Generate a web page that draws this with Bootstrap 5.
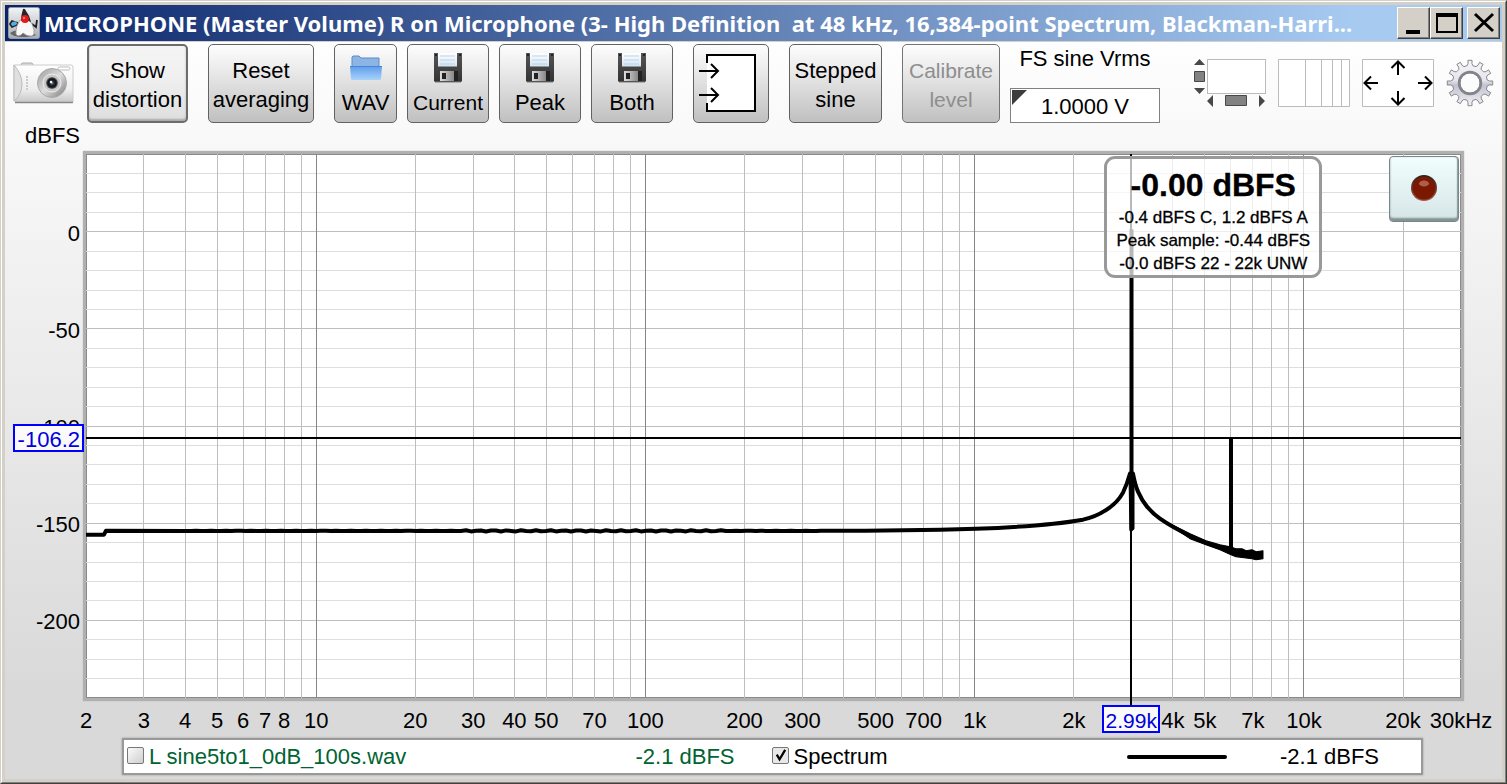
<!DOCTYPE html>
<html lang="en">
<head>
<meta charset="utf-8">
<meta name="viewport" content="width=device-width, initial-scale=1">
<title>RTA Spectrum</title>
<link rel="stylesheet" href="https://cdn.jsdelivr.net/npm/bootstrap@5.3.0/dist/css/bootstrap.min.css">
<style>
  body { font-family: "Liberation Sans", Arial, sans-serif; font-size: 22px; line-height: 30px; color: #000; background: #d4d0c8; }
  .app-window { border: 1px solid; border-color: #d4d0c8 #404040 #404040 #d4d0c8; min-height: 100vh; }
  .window-edge { border: 1px solid; border-color: #fff #808080 #808080 #fff; padding: 3px; }
  .title-bar { height: 36px; background: linear-gradient(90deg, #0a246a, #a6caf0 90%); color: #fff; font: 700 22px/36px "Noto Sans", sans-serif; padding: 0 2px 0 3px; }
  .title-bar h1 { font: inherit; white-space: pre; }
  .win-btn { width: 33px; height: 32px; padding: 0; background: #d4d0c8; border: 1px solid; border-color: #fff #404040 #404040 #fff; box-shadow: inset -1px -1px 0 #808080; }
  .client { background: linear-gradient(#fefefe, #d9d9d9 650px); border-top: 1px solid #d4d0c8; }
  .tool-btn { --bs-btn-color: #000; --bs-btn-disabled-color: #8e8e8e; --bs-btn-disabled-opacity: 1; --bs-btn-border-color: #626262; --bs-btn-disabled-border-color: #747474;
    --bs-btn-padding-x: 0px; --bs-btn-padding-y: 0px; --bs-btn-font-size: 22px; --bs-btn-line-height: 29px; --bs-btn-border-radius: 5px;
    height: 79px; flex: none; padding-top: 2px; background: linear-gradient(#fdfdfd, #ececec 30%, #c0c0c0) !important; }
  .tool-btn.pressed { background: linear-gradient(#f4f4f4, #f0f0f0 40%, #dedede) !important; border: 2px solid #6c6c6c; box-shadow: inset 0 -2px 2px #aaa; }
  .text-tight { font-size: 21px; }
  .save-btn { width: 82px; }
  .btn-art { display: block; margin: 0 auto 4px; }
  .bare-btn { padding: 0; border: 0; background: none; flex: none; line-height: 0; }
  .fs-input { width: 150px; height: 35px; border: 1px solid #808080; border-radius: 0; text-align: center; font-size: 22px; padding: 2px 0 0; color: #000; background: #fff; outline: 0; }
  .corner-flag { top: 2px; left: 2px; border-top: 15px solid #3c3c3c; border-right: 15px solid transparent; }
  .axis-unit { width: 75px; height: 28px; line-height: 26px; }
  .level-axis { width: 78px; }
  .plot-box { border: 3px solid #b0b0b0; background: #fff; box-shadow: 0 0 1px #aaa, inset 0 0 0 1px #8a8a8a; min-height: 300px; }
  .plot-margin { margin-right: 38px; }
  .freq-axis { height: 37px; margin: 0 41px 0 81px; }
  svg text { font-size: 22px; }
  .cursor-tag { border: 2px solid #00f; color: #0000e0; background: #fafafa; height: 28px; line-height: 27px; text-align: right; }
  .level-tag { width: 71px; right: -1px; padding-right: 2px; transform: translateY(-50%); z-index: 2; }
  .freq-tag { width: 58px; top: 4px; font-size: 21px; text-align: center; transform: translateX(-50%); }
  .readout { width: 218px; height: 122px; top: 2px; border: 3px solid #999; border-radius: 11px; background: rgba(255,255,255,.72); font-size: 17px; line-height: 23px; transform: translateX(-50%); padding-top: 9px; white-space: nowrap; -webkit-text-stroke: .3px #000; }
  .readout strong { display: block; font-size: 32px; line-height: 34px; margin-bottom: 4px; }
  .rec-btn { top: 2px; right: 2px; width: 70px; height: 66px; padding: 0; border: 1px solid #78888a; border-radius: 4px; background: linear-gradient(#f2fefe, #d5e5e5); box-shadow: inset 0 -3px 2px #809292, inset -1px 0 1px #8fa2a2; }
  .legend-box { margin: 0 79px 4px 117px; height: 37px; padding: 0 5px 0 3px; background: #fff; border: 2px solid #999; box-shadow: 0 0 2px #999; }
  .legend-cell { padding-right: 37px; line-height: 32px; }
  .trace-green { color: #006432; }
  .tick-box.form-check-input { width: 17px; height: 17px; margin: 0 5px 2px 0; border: 1px solid #777; border-radius: 2px; background-color: #e8e8e8; background-image: linear-gradient(135deg, #fafafa, #cfcfcf); flex: none; }
  .tick-box.form-check-input:checked { background-size: 100%; background-image: url("data:image/svg+xml,%3csvg xmlns='http://www.w3.org/2000/svg' viewBox='0 0 16 16'%3e%3cpath fill='none' stroke='%23000' stroke-width='2.4' d='M4 7l3 5 6-10'/%3e%3c/svg%3e"); }
  .trace-line { width: 100px; height: 4px; border-radius: 2px; background: #000; margin-right: 53px; }
</style>
</head>
<body>
<svg class="position-absolute" width="0" height="0" aria-hidden="true">
  <defs>
    <linearGradient id="gFloppy" x1="0" y1="0" x2="0" y2="1"><stop offset="0" stop-color="#555"/><stop offset="1" stop-color="#333"/></linearGradient>
    <linearGradient id="gSheet" x1="0" y1="0" x2="0" y2="1"><stop offset="0" stop-color="#fff"/><stop offset="1" stop-color="#d5e4f1"/></linearGradient>
    <linearGradient id="gMetal" x1="0" y1="0" x2="1" y2="0"><stop offset="0" stop-color="#ddd"/><stop offset="1" stop-color="#888"/></linearGradient>
  </defs>
  <symbol id="floppy" viewBox="0 0 30 32">
    <path d="M1 1h28v28l-1 1H2l-1-1z" fill="url(#gFloppy)"/>
    <path d="M2 30h26" stroke="#777" stroke-opacity=".5" stroke-width="2"/>
    <rect x="5" y="1" width="19" height="13.500" fill="url(#gSheet)"/>
    <path d="M7 4h15M7 8h15M7 12h15" stroke="#b9d5ea"/>
    <path d="M2 2h2v2H2zM26 2h2v2h-2z" fill="#222"/>
    <rect x="7" y="19" width="14" height="10" fill="url(#gMetal)"/>
    <rect x="9" y="21" width="4" height="6" fill="#222"/>
    <rect x="21" y="19" width="4" height="10" fill="#222"/>
  </symbol>
</svg>

<div class="app-window d-flex flex-column">
<div class="window-edge d-flex flex-column flex-grow-1">
  <header class="title-bar d-flex align-items-center">
    <svg class="flex-shrink-0 me-1" width="32" height="32" viewBox="0 0 32 32" aria-hidden="true">
      <defs><linearGradient id="gDuke" x1="0" y1="0" x2="0" y2="1"><stop offset="0" stop-color="#f2f4f6"/><stop offset="1" stop-color="#a9adb3"/></linearGradient></defs>
      <rect x=".5" y=".5" width="31" height="31" rx="2" fill="url(#gDuke)" stroke="#8e9aa8"/>
      <path d="M2 26q6-4 10-2l10 3q6 0 6 1-4 2-14 2-9 0-12-4z" fill="#666"/>
      <path d="M11 17 4 20l-2-3 2-3 6 2M24 17l4 3 1-7" stroke="#222" stroke-width="1.800" fill="none"/>
      <path d="M4 15l5-1-1 4-4 1z" fill="#4aaee8"/>
      <path d="M12 13Q8 19 8 24q-1 4 2 5 3 0 5-3 4 4 9 3 3-1 2-6-1-6-5-10z" fill="#f8f8f8" stroke="#888" stroke-width=".7"/>
      <path d="M15 2q2-1 3 2 4 5 5 11-5-3-10-1 0-6 2-12z" fill="#252525"/>
      <circle cx="17" cy="12" r="3.900" fill="#e21a1a"/><circle cx="16" cy="11" r="1.200" fill="#ff7070"/>
    </svg>
    <h1 class="m-0 flex-grow-1 overflow-hidden">MICROPHONE (Master Volume) R on Microphone (3- High Definition  at 48 kHz, 16,384-point Spectrum, Blackman-Harri...</h1>
    <div class="d-flex flex-shrink-0">
      <button class="win-btn" type="button" aria-label="Minimize"><svg class="d-block m-auto" width="28" height="28"><path d="M6 21h14v4H6z"/></svg></button>
      <button class="win-btn" type="button" aria-label="Maximize"><svg class="d-block m-auto" width="28" height="28"><path fill-rule="evenodd" d="M3 4h22v20H3zM5 8v14h18V8z"/></svg></button>
      <button class="win-btn ms-1" type="button" aria-label="Close"><svg class="d-block m-auto" width="28" height="28"><path d="M5 5l18 17M23 5 5 22" stroke="#000" stroke-width="3"/></svg></button>
    </div>
  </header>

  <main class="client d-flex flex-column flex-grow-1">
    <div class="toolbar d-flex align-items-start px-2" style="padding-top:2px" role="toolbar">
      <button class="bare-btn" type="button" aria-label="Capture image" style="margin:18px 13px 0 0">
        <svg width="61" height="43" viewBox="0 0 61 43">
          <defs>
            <linearGradient id="gCam" x1="0" y1="0" x2="0" y2="1"><stop offset="0" stop-color="#fff"/><stop offset=".65" stop-color="#eee"/><stop offset="1" stop-color="#c8c8c8"/></linearGradient>
            <linearGradient id="gRing" x1="0" y1="0" x2="1" y2="1"><stop offset="0" stop-color="#999"/><stop offset=".5" stop-color="#ddd"/><stop offset="1" stop-color="#777"/></linearGradient>
            <radialGradient id="gLens"><stop offset="0" stop-color="#8fa0c8"/><stop offset=".35" stop-color="#222839"/><stop offset=".7" stop-color="#111"/><stop offset="1" stop-color="#777"/></radialGradient>
          </defs>
          <path d="M8 3q0-2 2-2h8q2 0 2 2" fill="#ddd" stroke="#aaa"/>
          <path d="M1 3h57q2 0 2 2v35H3q-2 0-2-3z" fill="url(#gCam)" stroke="#ccc"/>
          <path d="M1 3q8 9 8 19T1 39z" fill="#e0e0e0" stroke="#bbb"/>
          <path d="M2 40.500h58" stroke="#888" stroke-width="1.500"/>
          <path d="M14 14v15" stroke="#ccc" stroke-width="2" stroke-dasharray="2 1"/>
          <rect x="45" y="5" width="12" height="3" rx="1.500" fill="#fff" stroke="#bbb"/>
          <circle cx="39" cy="21" r="14.500" fill="url(#gRing)" stroke="#aaa"/>
          <circle cx="39" cy="21" r="9" fill="#c8c8c8" stroke="#eee"/>
          <circle cx="39" cy="21" r="6" fill="url(#gLens)"/><circle cx="38" cy="20" r="1.200" fill="#fff"/>
        </svg>
      </button>
      <button class="btn tool-btn pressed" type="button" style="width:101px">Show<br>distortion</button>
      <button class="btn tool-btn" type="button" style="width:106px;margin-left:20px">Reset<br>averaging</button>
      <button class="btn tool-btn" type="button" style="width:63px;margin:0 10px 0 20px">
        <svg class="btn-art" width="34" height="32" viewBox="0 0 34 32">
          <defs><linearGradient id="gFold" x1="0" y1="0" x2="0" y2="1"><stop offset="0" stop-color="#5f9ceb"/><stop offset="1" stop-color="#a9d2fb"/></linearGradient></defs>
          <g transform="translate(0 2)"><path d="M3 12V3l1-1h6l2 2h18v9H3z" fill="#8db5e4" stroke="#5c8cc9"/>
          <path d="M1 12h32l-1 13-1 1H3l-1-1z" fill="url(#gFold)"/><path d="M1 12.500h32" stroke="#4486de"/></g>
        </svg>WAV</button>
      <button class="btn tool-btn save-btn text-tight" type="button"><svg class="btn-art" width="30" height="32"><use href="#floppy"/></svg>Current</button>
      <button class="btn tool-btn save-btn" type="button" style="margin:0 10px"><svg class="btn-art" width="30" height="32"><use href="#floppy"/></svg>Peak</button>
      <button class="btn tool-btn save-btn" type="button"><svg class="btn-art" width="30" height="32"><use href="#floppy"/></svg>Both</button>
      <button class="btn tool-btn pt-0" type="button" aria-label="Input selection" style="width:76px;margin:0 20px">
        <svg class="d-block" width="60" height="60" viewBox="0 0 60 60" fill="none" stroke="#000" stroke-width="2" style="margin:-2px 0 0 5px">
          <path d="M8 1h48v57H8z" fill="#fff" stroke="none"/><path d="M8 10V2h48v56H8v-8"/><path d="M0 18h18M12 11l7 7-7 7M0 42h18M12 35l7 7-7 7"/>
        </svg>
      </button>
      <button class="btn tool-btn" type="button" style="width:93px">Stepped<br>sine</button>
      <button class="btn tool-btn text-tight" type="button" disabled style="width:98px;margin:0 10px 0 20px">Calibrate<br>level</button>
      <div class="text-center flex-shrink-0">
        <label class="d-block" for="fs">FS sine Vrms</label>
        <div class="position-relative" style="margin-top:14px"><input class="form-control fs-input" id="fs" value="1.0000 V"><span class="corner-flag position-absolute"></span></div>
      </div>
      <div class="d-flex ms-auto" style="gap:12px;padding-top:15px">
        <button class="bare-btn" type="button" aria-label="Scrollbars"><svg class="d-block" width="73" height="48" viewBox="0 0 73 48" fill="#484848">
          <rect x="14.500" y=".5" width="58" height="34" fill="#fff" stroke="#bbb"/>
          <path d="M1 6l5.500-6L12 6zM1 29l5.500 6L12 29zM20 36v12l-6-6zM66 36v12l6-6z"/>
          <path d="M1.500 12.500h10v10h-10zM32.500 36.500h21v10h-21z" fill="#828282" stroke="#484848"/></svg></button>
        <button class="bare-btn" type="button" aria-label="Frequency axis scale"><svg class="d-block" width="72" height="48"><path d="M.5.5h71v47H.5zM27.500 0v48M43.500 0v48M54.500 0v48M63.500 0v48" fill="#fff" stroke="#bbb"/></svg></button>
        <button class="bare-btn" type="button" aria-label="Graph limits"><svg class="d-block" width="72" height="48" fill="none"><path d="M.5.5h71v47H.5z" fill="#fff" stroke="#bbb"/><path d="M36 16V3M29.500 9 36 2.500 42.500 9M36 32v13M29.500 39l6.500 6.500 6.500-6.500M16 24H3M9 17.500 2.500 24 9 30.500M56 24h13M63 17.500l6.500 6.500-6.500 6.500" stroke="#000" stroke-width="2"/></svg></button>
        <button class="bare-btn" type="button" aria-label="Controls"><svg class="d-block" width="48" height="48" viewBox="-24 -24 48 48">
          <defs><linearGradient id="gGear" x1="0" y1="0" x2="0" y2="1"><stop offset="0" stop-color="#f6f6f8"/><stop offset=".45" stop-color="#e4e4ec"/><stop offset=".55" stop-color="#c2c2d0"/><stop offset="1" stop-color="#f2f2f6"/></linearGradient></defs>
          <g id="gear" fill="url(#gGear)" stroke="#88888c" stroke-width="1"></g>
        </svg></button>
      </div>
    </div>

    <div class="axis-unit text-end">dBFS</div>

    <div class="d-flex flex-grow-1 plot-margin">
      <div class="level-axis position-relative d-flex flex-shrink-0 py-1">
        <svg id="levels" class="w-100 overflow-visible" style="height:auto"></svg>
        <div class="cursor-tag level-tag position-absolute" id="levelTag">-106.2</div>
      </div>
      <div class="plot-box position-relative d-flex flex-grow-1">
        <svg id="plot" class="flex-grow-1 overflow-visible" role="img" aria-label="Spectrum plot">
          <g id="grid"></g>
          <svg viewBox="0 0 1375 543" preserveAspectRatio="none" width="100%" height="100%" fill="none" stroke="#000" stroke-width="4" stroke-linejoin="round">
            <path id="trace"/>
            <path d="M740 376Q820 376 890 374Q960 371.500 997 365Q1010 362 1019 356Q1031 349 1037 338Q1041 330 1044 319H1047Q1049 330 1052 337Q1056 346 1061 352Q1067 359 1074 364Q1087 373 1104 381Q1120 389 1144 396"/>
            <path d="M1045.500 75V375M1145 283V394"/>
            <path d="M1043 322h5v52l-2 2h-2z" fill="#000" stroke-width="1"/>
            <path d="M1074 364L1104 379 1120 386 1134 390 1144 392 1150 394 1156 394 1160 396 1166 395 1170 397 1177 396V404L1170 405 1166 404 1158 403 1150 402 1145 400 1134 395 1120 390 1104 384Z" fill="#000" stroke-width="1"/>
          </svg>
          <g id="cursors" stroke="#000" stroke-width="2" shape-rendering="crispEdges"></g>
        </svg>
        <div class="readout position-absolute text-center" id="readout"><strong>-0.00 dBFS</strong>-0.4 dBFS C, 1.2 dBFS A<br>Peak sample: -0.44 dBFS<br>-0.0 dBFS 22 - 22k UNW</div>
        <button class="rec-btn position-absolute" type="button" aria-label="Record"><svg class="d-block mx-auto" width="30" height="30" viewBox="0 0 30 30"><defs><linearGradient id="gLed" x1="0" y1="0" x2="0" y2="1"><stop offset="0" stop-color="#222"/><stop offset="1" stop-color="#a95548"/></linearGradient></defs><circle cx="15" cy="14" r="13" fill="url(#gLed)"/><circle cx="15" cy="14" r="11.500" fill="#7b1900"/><ellipse cx="15" cy="9.500" rx="5" ry="3" fill="#bd7768" opacity=".75"/></svg></button>
      </div>
    </div>

    <div class="freq-axis position-relative">
      <svg id="freqs" class="w-100 h-100 d-block overflow-visible" text-anchor="middle"></svg>
      <div class="cursor-tag freq-tag position-absolute" id="freqTag">2.99k</div>
    </div>

    <div class="legend-box row row-cols-2 g-0">
      <div class="legend-cell col d-flex align-items-center trace-green">
        <input class="form-check-input tick-box" type="checkbox" id="t1"><label for="t1">L sine5to1_0dB_100s.wav</label><span class="ms-auto">-2.1 dBFS</span>
      </div>
      <div class="legend-cell col d-flex align-items-center">
        <input class="form-check-input tick-box" type="checkbox" id="t2" checked><label for="t2">Spectrum</label><span class="trace-line ms-auto"></span><span>-2.1 dBFS</span>
      </div>
    </div>
  </main>
</div>
</div>

<script src="https://cdn.jsdelivr.net/npm/bootstrap@5.3.0/dist/js/bootstrap.bundle.min.js"></script>
<script>
  const NS = 'http://www.w3.org/2000/svg';
  const add = (id, tag, attrs, text) => {
    const el = document.createElementNS(NS, tag);
    for (const k in attrs) el.setAttribute(k, attrs[k]);
    if (text) el.textContent = text;
    document.getElementById(id).append(el);
  };
  // Log frequency axis 2 Hz - 30 kHz, linear level axis +40 to -240 dBFS
  const fx = f => 100 * Math.log(f / 2) / Math.log(15000) + '%';
  const ly = l => 100 * (40 - l) / 280 + '%';

  for (let l = 30; l > -240; l -= 10)
    add('grid', 'line', { x1: 0, x2: '100%', y1: ly(l), y2: ly(l), stroke: l % 50 ? '#dedede' : '#bebebe', 'shape-rendering': 'crispEdges' });
  for (let d = 1; d <= 10000; d *= 10)
    for (let n = 1; n < 10; n++) {
      const f = n * d;
      if (f > 2 && f < 30000) add('grid', 'line', { x1: fx(f), x2: fx(f), y1: 0, y2: '100%', stroke: n === 1 ? '#868686' : '#bebebe', 'shape-rendering': 'crispEdges' });
    }
  add('cursors', 'line', { x1: 0, x2: '100%', y1: ly(-106.2), y2: ly(-106.2) });
  add('cursors', 'line', { x1: fx(2990), x2: fx(2990), y1: 0, y2: '100%' });
  add('freqs', 'line', { x1: fx(2990), x2: fx(2990), y1: -3, y2: 5, stroke: '#000', 'stroke-width': 2, 'shape-rendering': 'crispEdges' });

  // Noise floor with a slight ripple through the low and middle bands
  let floor = 'M0 380H18L20 376';
  for (let x = 100; x < 740; x += 5) {
    const amp = x < 380 ? .2 : x < 640 ? .6 : .2;
    floor += 'L' + x + ' ' + (376.2 + amp * Math.sin(x * 1.7)).toFixed(1);
  }
  document.getElementById('trace').setAttribute('d', floor + 'L740 376');

  for (const l of [0, -50, -100, -150, -200])
    add('levels', 'text', { x: 75, y: ly(l), dy: 9, 'text-anchor': 'end' }, String(l));
  for (const f of [2,3,4,5,6,7,8,10,20,30,40,50,70,100,200,300,500,700,1000,2000,4000,5000,7000,10000,20000,30000])
    add('freqs', 'text', { x: fx(f), y: 27 }, f === 30000 ? '30kHz' : f < 1000 ? String(f) : f / 1000 + 'k');

  document.getElementById('levelTag').style.top = ly(-106.2);
  document.getElementById('freqTag').style.left = fx(2990);
  document.getElementById('readout').style.left = 'calc(' + fx(2990) + ' + 82px)';

  // Gear outline: 12 teeth round an open hub
  const pt = (r, a) => (r * Math.sin(a)).toFixed(2) + ' ' + (-r * Math.cos(a)).toFixed(2);
  const p = [];
  for (let i = 0; i < 12; i++) {
    const a = i * Math.PI / 6;
    p.push(pt(17.5, a - .17), pt(19.5, a - .1), pt(22.8, a - .09), pt(22.8, a + .09), pt(19.5, a + .1), pt(17.5, a + .17));
  }
  add('gear', 'path', { 'fill-rule': 'evenodd', 'stroke-linejoin': 'round', d: 'M' + p.join('L') + 'ZM-10 0a10 10 0 1 0 20 0a10 10 0 1 0-20 0' });
  add('gear', 'circle', { r: 11, fill: 'none', stroke: '#83838a', 'stroke-width': 2.5 });
</script>
</body>
</html>
